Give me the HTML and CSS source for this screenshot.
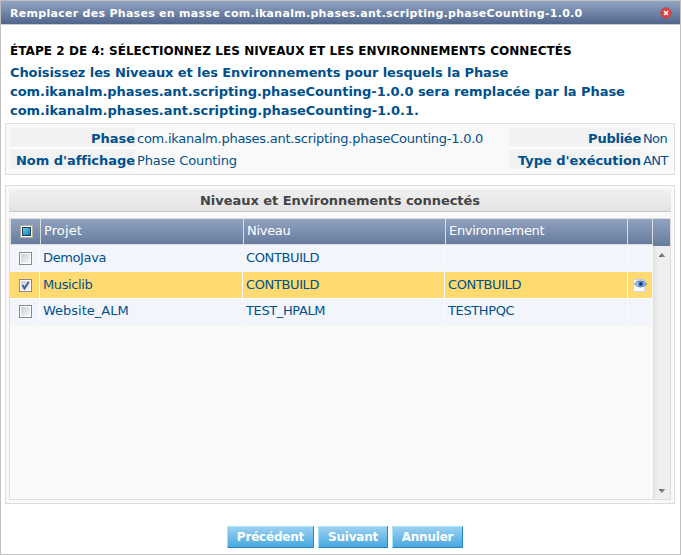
FILE: index.html
```html
<!DOCTYPE html>
<html lang="fr">
<head>
<meta charset="utf-8">
<title>Remplacer des Phases en masse</title>
<link rel="stylesheet" href="styles.css">
</head>
<body>
<div class="dialog">
  <header class="titlebar">
    <span class="title">Remplacer des Phases en masse com.ikanalm.phases.ant.scripting.phaseCounting-1.0.0</span>
    <svg class="close" viewBox="0 0 12 12"><circle cx="6" cy="6" r="5.3" fill="#df3f3f" stroke="#b54a55" stroke-width=".8"/><path d="M4 4l4 4M8 4l-4 4" stroke="#fff" stroke-width="1.6"/></svg>
  </header>
  <h1 class="step"><span>ÉTAPE 2 DE 4: SÉLECTIONNEZ LES NIVEAUX ET LES ENVIRONNEMENTS CONNECTÉS</span></h1>
  <p class="intro"><span class="l1">Choisissez les Niveaux et les Environnements pour lesquels la Phase</span><br><span class="l2">com.ikanalm.phases.ant.scripting.phaseCounting-1.0.0 sera remplacée par la Phase</span><br><span class="l3">com.ikanalm.phases.ant.scripting.phaseCounting-1.0.1.</span></p>
  <section class="info">
    <b class="label">Phase</b><span class="value long">com.ikanalm.phases.ant.scripting.phaseCounting-1.0.0</span><b class="label tight">Publiée</b><span class="value short">Non</span>
    <b class="label">Nom d'affichage</b><span class="value">Phase Counting</span><b class="label">Type d'exécution</b><span class="value short">ANT</span>
  </section>
  <section class="panel">
    <h2 class="heading"><span>Niveaux et Environnements connectés</span></h2>
    <div class="table">
      <div class="thead">
        <div class="th check"><i class="allbox"></i></div><div class="th project">Projet</div><div class="th">Niveau</div><div class="th">Environnement</div><div class="th"></div><div class="th last"></div>
      </div>
      <div class="content">
        <div class="rows">
          <div class="row"><div class="check"><i class="box"></i></div><div>DemoJava</div><div>CONTBUILD</div><div></div><div></div></div>
          <div class="row selected"><div class="check"><i class="box"><svg viewBox="0 0 11 11"><path d="M2.500 5l2 3.600L8.700 1.800" fill="none" stroke="#4b5f9f" stroke-width="2"/></svg></i></div><div>Musiclib</div><div>CONTBUILD</div><div>CONTBUILD</div><div class="action"><svg class="eye" viewBox="0 0 16 15"><path d="M1.500 1.500h11v12h-11z" fill="#fff" stroke="#c1daf0"/><path d="M2.500 6Q8 0 15 6Q8 12 2.500 6Z" fill="#a8c8e8" stroke="#70839f"/><path d="M4 3.500Q8.500 .5 13 3.500" fill="none" stroke="#7c8798" stroke-dasharray="1 1"/><circle cx="8.900" cy="5.800" r="2.900" fill="#5689c8"/><circle cx="8.900" cy="5.800" r="1.600" fill="#102f78"/></svg></div></div>
          <div class="row third"><div class="check"><i class="box"></i></div><div class="site">Website_ALM</div><div>TEST_HPALM</div><div>TESTHPQC</div><div></div></div>
        </div>
        <div class="scroll"><i class="up"></i><i class="down"></i></div>
      </div>
    </div>
  </section>
  <footer class="buttons"><button class="b1">Précédent</button><button class="b2">Suivant</button><button class="b3">Annuler</button></footer>
</div>
</body>
</html>
```
FILE: styles.css
```css
* { box-sizing: border-box; }
body { margin: 0; font: 13px/18px "DejaVu Sans", Verdana, sans-serif; color: #00508c; }
.dialog { width: 681px; height: 555px; border: 1px solid #bfbfbf; background: #fff; overflow: hidden; }
.titlebar { height: 24px; display: flex; align-items: center; justify-content: space-between; padding: 3px 8px 0 9px; background: linear-gradient(#91a4c2, #50658b); border-bottom: 1px solid #ccc; color: #fff; font-size: 11px; font-weight: bold; letter-spacing: .286px; white-space: nowrap; }
.close { width: 12px; height: 12px; margin-top: -3px; }
.step { margin: 16px 0 0 9px; font-size: 12px; line-height: 20px; height: 18px; letter-spacing: .06px; color: #000; white-space: nowrap; }
.intro { margin: 4px 0 0 9px; font-size: 13px; font-weight: bold; line-height: 19px; white-space: nowrap; }
.l1 { letter-spacing: -.09px; }
.l2 { letter-spacing: -.05px; }
.l3 { letter-spacing: -.04px; }
.info { margin: 3px 0 0 4px; width: 670px; height: 52px; padding: 4px; border: 1px solid #ddd; background: #f9f9f9; display: grid; grid-template-columns: 125px 374px 132px 29px; grid-auto-rows: 20px; row-gap: 2px; white-space: nowrap; }
.label { background: #f2f2f2; border-bottom: 1px solid #fff; text-align: right; line-height: 21px; letter-spacing: -.04px; }
.label.tight { letter-spacing: -.25px; }
.value { padding-left: 2px; line-height: 21px; letter-spacing: -.12px; }
.value.long { letter-spacing: -.25px; }
.value.short { letter-spacing: -.6px; }
.panel { margin: 10px 0 0 4px; width: 670px; height: 319px; padding: 3px; border: 1px solid #ddd; background: #f9f9f9; }
.heading { margin: 0; height: 23px; font-size: 13px; line-height: 23px; text-align: center; letter-spacing: -.04px; color: #444; background: linear-gradient(#f0f0f0, #e3e3e3); border-bottom: 1px solid #c8c8c8; }
.table { margin-top: 6px; height: 282px; width: 662px; border: 1px solid #ddd; display: flex; flex-direction: column; }
.thead { height: 26px; display: grid; grid-template-columns: 30px 203px 202px 182px 25px 1fr; padding-left: 1px; background: #ddd; }
.th { border-right: 1px solid #ddd; margin-bottom: 1px; background: linear-gradient(#90a2bf, #677c9e); color: #fff; padding-left: 3px; line-height: 24px; letter-spacing: -.3px; }
.th.project { letter-spacing: .1px; }
.th.check { margin-right: 1px; border: 0; padding: 0 0 0 2px; }
.th.last { border: 0; margin-bottom: -1px; z-index: 1; }
.check { display: flex; align-items: center; justify-content: center; }
.allbox { width: 13px; height: 13px; border: 1px solid #b8b1a3; background: linear-gradient(135deg, #73c9e6, #127bb0) content-box, #143d59; box-shadow: inset 0 0 0 1px #fff; padding: 2px; }
.content { flex: 1; display: flex; }
.rows { width: 642px; }
.row { height: 27px; display: grid; grid-template-columns: 29px 202px 201px 182px 24px; column-gap: 1px; border-bottom: 1px solid #f5f5f5; letter-spacing: -.38px; }
.row > div { background: #f2f6fc; line-height: 25px; padding-left: 3px; }
.row > .check { padding: 0 0 0 2px; }
.row.selected { border-color: #fff; background: #fff; }
.row.selected > div { background: #ffda70; }
.row.third > div { line-height: 24px; }
.row.third > .check { padding-bottom: 2px; }
.row > .site { letter-spacing: 0; }
.box { width: 13px; height: 13px; border: 1px solid #8a8a8a; padding: 1px; background: linear-gradient(135deg, #c9cdd3, #f8f8f8) content-box, #fff; display: block; }
.box svg { display: block; width: 11px; height: 11px; margin: -1px; }
.row > .action { padding: 6px 0 0 4px; }
.eye { display: block; width: 16px; height: 15px; }
.scroll { margin-left: 1px; flex: 1; border-left: 1px solid #ddd; background: linear-gradient(90deg, #e6e6e6, #efefef 5px); display: flex; flex-direction: column; justify-content: space-between; align-items: center; padding: 8px 0 6px; }
.up, .down { width: 7px; height: 4px; background: linear-gradient(90deg, #555, #aaa); }
.up { clip-path: polygon(50% 0, 100% 100%, 0 100%); }
.down { clip-path: polygon(0 0, 100% 0, 50% 100%); }
.buttons { display: flex; gap: 4px; margin: 22px 0 0 226px; }
.buttons button { height: 22px; padding: 0; font: bold 12px/20px "DejaVu Sans", Verdana, sans-serif; letter-spacing: -.2px; color: #fff; border: 1px solid; border-color: #a9e5f8 #2587c8 #2587c8 #a9e5f8; background: linear-gradient(#9bd1f1, #48a8df); }
.b1 { width: 87px; } .b2 { width: 70px; } .b3 { width: 71px; }
```
